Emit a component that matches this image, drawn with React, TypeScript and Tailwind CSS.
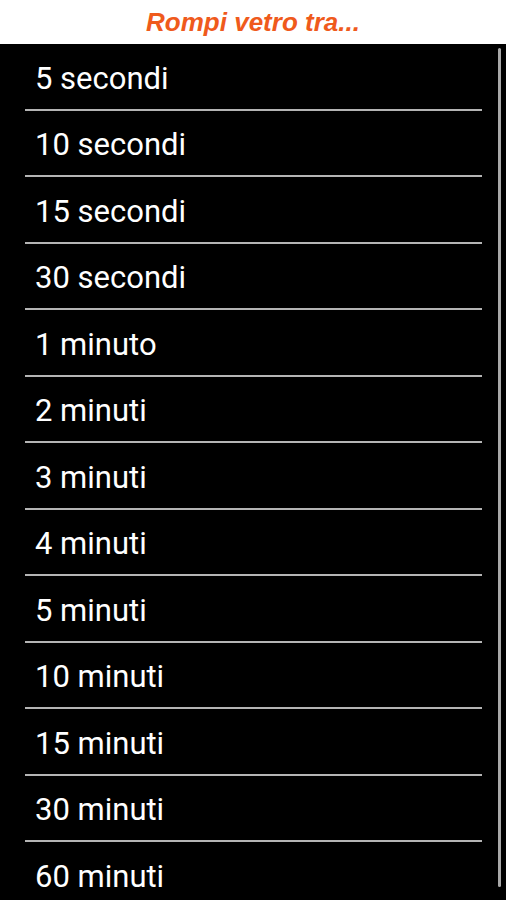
const items = [
  "5 secondi",
  "10 secondi",
  "15 secondi",
  "30 secondi",
  "1 minuto",
  "2 minuti",
  "3 minuti",
  "4 minuti",
  "5 minuti",
  "10 minuti",
  "15 minuti",
  "30 minuti",
  "60 minuti",
];

export default function App() {
  return (
    <div className="w-[506px] h-[900px] overflow-hidden bg-black font-['Roboto',sans-serif]">
      {/* Title bar */}
      <div className="h-[44px] bg-white flex items-center justify-center">
        <h1 className="text-[26px] font-bold italic text-[#ef5a1c] font-['Liberation_Sans',Arial,sans-serif] leading-none">
          Rompi vetro tra...
        </h1>
      </div>

      {/* List */}
      <div className="relative">
        {items.map((label, i) => (
          <div key={label}>
            <div className="h-[64.5px] flex items-center pl-[35px] pt-[4px] text-white text-[31px] leading-none">
              {label}
            </div>
            {i < items.length - 1 && (
              <div className="ml-[25px] w-[457px] h-[2px] bg-[#b4b4b4]" />
            )}
          </div>
        ))}

        {/* scrollbar */}
        <div className="absolute left-[498px] top-[4px] w-[3px] h-[839px] rounded-full bg-[#a8a8a8]" />
      </div>
    </div>
  );
}
